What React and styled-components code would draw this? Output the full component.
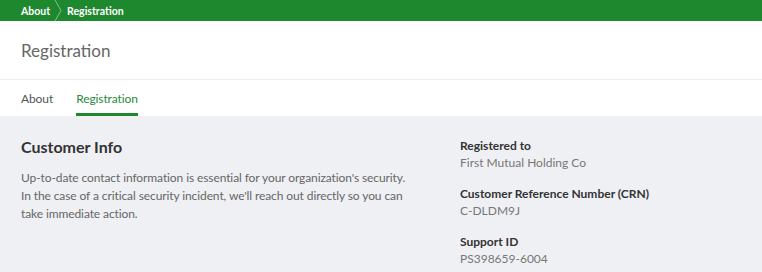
import React from 'react'
import styled, { createGlobalStyle } from 'styled-components'

const GlobalStyle = createGlobalStyle`
  html, body { margin: 0; padding: 0; background: #eff0f3; }
  body { font-family: Lato, "Open Sans", sans-serif; }
`

const TopBar = styled.nav`
  height: 21px;
  background: #1e882e;
  display: flex;
  align-items: center;
  padding-left: 21px;
  font-size: 10.5px;
  font-weight: 700;
  color: #fff;
`

const Crumb = styled.span`
  display: flex;
  align-items: center;
  height: 100%;
`

const Chevron = styled.svg`
  width: 10px;
  height: 21px;
  margin: 0 3px 0 4px;
`

const Header = styled.header`
  background: #fff;
  height: 59px;
  display: flex;
  align-items: center;
  padding-left: 21px;
  border-bottom: 1px solid #ececec;
  box-sizing: border-box;
`

const Title = styled.h1`
  margin: 0;
  font-size: 17px;
  font-weight: 400;
  color: #666;
`

const Tabs = styled.div`
  background: #fff;
  height: 36px;
  display: flex;
  gap: 23px;
  padding-left: 21px;
  box-sizing: border-box;
`

const Tab = styled.div`
  display: flex;
  align-items: center;
  font-size: 12px;
  letter-spacing: -0.1px;
  color: ${p => (p.$active ? '#2a8a3a' : '#555')};
  border-bottom: 3px solid ${p => (p.$active ? '#1e882e' : 'transparent')};
  padding-top: 3px;
`

const Body = styled.main`
  display: grid;
  grid-template-columns: 439px 1fr;
  padding: 21px 21px 0;
`

const Heading = styled.h2`
  margin: 0 0 13px;
  font-size: 16px;
  font-weight: 700;
  color: #333;
`

const Text = styled.p`
  margin: 0;
  font-size: 12px;
  letter-spacing: -0.1px;
  line-height: 18px;
  color: #666;
  width: 395px;
`

const Facts = styled.dl`
  margin: 0;
  display: flex;
  flex-direction: column;
  gap: 14px;
`

const Fact = styled.div`
  display: flex;
  flex-direction: column;
`

const Label = styled.dt`
  font-size: 12px;
  font-weight: 700;
  color: #333;
  line-height: 17px;
`

const Value = styled.dd`
  margin: 0;
  font-size: 12px;
  color: #777;
  line-height: 17px;
`

const facts = [
  ['Registered to', 'First Mutual Holding Co'],
  ['Customer Reference Number (CRN)', 'C-DLDM9J'],
  ['Support ID', 'PS398659-6004'],
]

export default function App() {
  return (
    <>
      <GlobalStyle />
      <TopBar>
        <Crumb>About</Crumb>
        <Chevron viewBox="0 0 10 21">
          <path d="M1 0 L7 10.5 L1 21" fill="none" stroke="#7fc48a" strokeWidth="1" />
        </Chevron>
        <Crumb>Registration</Crumb>
      </TopBar>
      <Header>
        <Title>Registration</Title>
      </Header>
      <Tabs>
        <Tab>About</Tab>
        <Tab $active>Registration</Tab>
      </Tabs>
      <Body>
        <section>
          <Heading>Customer Info</Heading>
          <Text>
            Up-to-date contact information is essential for your organization's security.
            In the case of a critical security incident, we'll reach out directly so you can
            take immediate action.
          </Text>
        </section>
        <Facts>
          {facts.map(([label, value]) => (
            <Fact key={label}>
              <Label>{label}</Label>
              <Value>{value}</Value>
            </Fact>
          ))}
        </Facts>
      </Body>
    </>
  )
}
